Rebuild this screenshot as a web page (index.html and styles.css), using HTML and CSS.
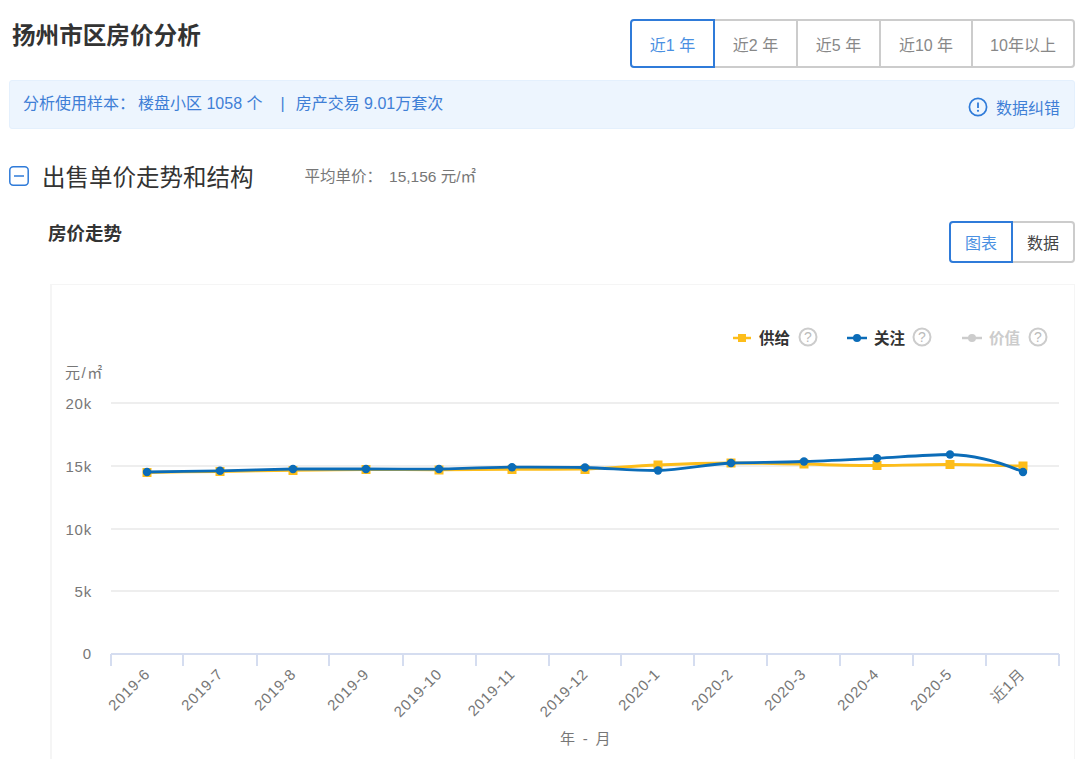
FILE: index.html
```html
<!DOCTYPE html>
<html lang="zh-CN">
<head>
    <meta charset="UTF-8">
    <title>扬州市区房价分析</title>
    <link rel="stylesheet" href="styles.css">
</head>
<body>

<header class="page-head">
    <h1>扬州市区房价分析</h1>
    <div class="tabs">
        <a class="tab active">近1 年</a>
        <a class="tab">近2 年</a>
        <a class="tab">近5 年</a>
        <a class="tab tab-wide">近10 年</a>
        <a class="tab tab-last">10年以上</a>
    </div>
</header>

<div class="sample-bar">
    <p class="sample-text">
        <span>分析使用样本：</span>
        <span>楼盘小区 1058 个</span>
        <span>|</span>
        <span>房产交易 9.01万套次</span>
    </p>
    <a class="correct">
        <svg width="20" height="20" viewBox="0 0 20 20">
            <circle cx="10" cy="10" r="8.6" fill="none" stroke="#2f7bd9" stroke-width="1.7"/>
            <path d="M10 5.5v5.6" stroke="#2f7bd9" stroke-width="1.8" fill="none"/>
            <circle cx="10" cy="13.8" r="1.1" fill="#2f7bd9"/>
        </svg>
        <span>数据纠错</span>
    </a>
</div>

<section class="section-head">
    <svg class="collapse" width="20" height="20" viewBox="0 0 20 20">
        <rect x="0.8" y="0.8" width="18.4" height="18.4" rx="3.5" fill="none" stroke="#2f7bd9" stroke-width="1.5"/>
        <path d="M5 10h10" stroke="#2f7bd9" stroke-width="1.5"/>
    </svg>
    <h2>出售单价走势和结构</h2>
    <p class="average"><span>平均单价：</span><span>15,156 元/㎡</span></p>
</section>

<div class="chart-head">
    <h3>房价走势</h3>
    <div class="tabs">
        <a class="tab tab-small active">图表</a>
        <a class="tab tab-small dark">数据</a>
    </div>
</div>

<div class="chart-card">
    <svg class="chart" width="1024" height="474" viewBox="52 285 1024 474">
        <!-- legend -->
        <g class="legend">
            <path d="M733 338h18" stroke="#fdbd1a" stroke-width="2.5"/>
            <rect x="738" y="334" width="8" height="8" fill="#fdbd1a"/>
            <text x="759" y="344">供给</text>
            <circle class="help" cx="808" cy="337" r="8.5"/>
            <text class="help-mark" x="808" y="342">?</text>

            <path d="M847 338h20" stroke="#0b6cb8" stroke-width="2.5"/>
            <circle cx="857" cy="338" r="4" fill="#0b6cb8"/>
            <text x="874" y="344">关注</text>
            <circle class="help" cx="922" cy="337" r="8.5"/>
            <text class="help-mark" x="922" y="342">?</text>

            <path d="M962 338h20" stroke="#ccc" stroke-width="2.5"/>
            <circle cx="972" cy="338" r="4" fill="#ccc"/>
            <text class="off" x="989" y="344">价值</text>
            <circle class="help" cx="1038" cy="337" r="8.5"/>
            <text class="help-mark" x="1038" y="342">?</text>
        </g>

        <!-- y axis -->
        <text class="axis-text unit" x="65" y="378">元/㎡</text>
        <path class="grid" d="M111 403H1059M111 466H1059M111 529H1059M111 591H1059"/>
        <text class="axis-text y-label" x="92" y="409">20k</text>
        <text class="axis-text y-label" x="92" y="472">15k</text>
        <text class="axis-text y-label" x="92" y="535">10k</text>
        <text class="axis-text y-label" x="92" y="597">5k</text>
        <text class="axis-text y-label" x="92" y="659">0</text>

        <!-- x axis -->
        <path class="axis" d="M111 654H1059M111 654v12M183 654v12M257 654v12M329 654v12M403 654v12M476 654v12M549 654v12M621 654v12M694 654v12M767 654v12M840 654v12M913 654v12M986 654v12M1059 654v12"/>
        <g class="axis-text x-labels">
            <text transform="translate(151 675) rotate(-45)">2019-6</text>
            <text transform="translate(224 675) rotate(-45)">2019-7</text>
            <text transform="translate(297 675) rotate(-45)">2019-8</text>
            <text transform="translate(370 675) rotate(-45)">2019-9</text>
            <text transform="translate(443 675) rotate(-45)">2019-10</text>
            <text transform="translate(516 675) rotate(-45)">2019-11</text>
            <text transform="translate(589 675) rotate(-45)">2019-12</text>
            <text transform="translate(661 675) rotate(-45)">2020-1</text>
            <text transform="translate(734 675) rotate(-45)">2020-2</text>
            <text transform="translate(807 675) rotate(-45)">2020-3</text>
            <text transform="translate(880 675) rotate(-45)">2020-4</text>
            <text transform="translate(953 675) rotate(-45)">2020-5</text>
            <text transform="translate(1026 675) rotate(-45)">近1月</text>
        </g>
        <text class="axis-text x-name" x="560" y="744">年 - 月</text>

        <!-- supply -->
        <path class="line" stroke="#fdbd1a" d="M147 472.500 C171 472.200 196 471.700 220 471.500 C244 471 269 470.500 293 470.300 C317 469.900 342 469.500 366 469.500 C390 469.500 415 469.700 439 469.800 C463 469.700 488 469.300 512 469.300 C536 469.300 561 469.400 585 469.200 C610 468 634 466 658 465 C682 463.800 707 463 731 463 C755 463 780 463.800 804 464 C828 464.800 853 465.600 877 465.500 C901 465.200 926 464.400 950 464.500 C975 464.700 999 465.600 1023 466"/>
        <g fill="#fdbd1a">
            <rect x="142.500" y="468" width="9" height="9"/>
            <rect x="215.500" y="467" width="9" height="9"/>
            <rect x="288.500" y="466" width="9" height="9"/>
            <rect x="361.500" y="465" width="9" height="9"/>
            <rect x="434.500" y="465.500" width="9" height="9"/>
            <rect x="507.500" y="465" width="9" height="9"/>
            <rect x="580.500" y="465" width="9" height="9"/>
            <rect x="653.500" y="460.500" width="9" height="9"/>
            <rect x="726.500" y="458.500" width="9" height="9"/>
            <rect x="799.500" y="459.500" width="9" height="9"/>
            <rect x="872.500" y="461" width="9" height="9"/>
            <rect x="945.500" y="460" width="9" height="9"/>
            <rect x="1018.500" y="461.500" width="9" height="9"/>
        </g>

        <!-- attention -->
        <path class="line" stroke="#0b6cb8" d="M147 472 C171 471.600 196 471.200 220 470.800 C244 470.200 269 469.400 293 469 C317 469 342 469 366 469 C390 469 415 469.200 439 469 C463 468.400 488 467.400 512 467.200 C536 467.200 561 467.100 585 467.500 C610 468.300 634 470.700 658 470.500 C682 469.500 707 464.500 731 463 C755 462.300 780 462.300 804 461.500 C828 460.800 853 459.500 877 458.300 C901 457 926 454.700 950 454.500 C975 455 1000 462 1023 472"/>
        <g fill="#0b6cb8">
            <circle cx="147" cy="472" r="4.200"/>
            <circle cx="220" cy="470.800" r="4.200"/>
            <circle cx="293" cy="469" r="4.200"/>
            <circle cx="366" cy="469" r="4.200"/>
            <circle cx="439" cy="469" r="4.200"/>
            <circle cx="512" cy="467.200" r="4.200"/>
            <circle cx="585" cy="467.500" r="4.200"/>
            <circle cx="658" cy="470.500" r="4.200"/>
            <circle cx="731" cy="463" r="4.200"/>
            <circle cx="804" cy="461.500" r="4.200"/>
            <circle cx="877" cy="458.300" r="4.200"/>
            <circle cx="950" cy="454.500" r="4.200"/>
            <circle cx="1023" cy="472" r="4.200"/>
        </g>
    </svg>
</div>

</body>
</html>
```

FILE: styles.css
```css
/* General Styles */
html, body {
    height: 759px;
    overflow: hidden;
}
body {
    margin: 0;
    padding: 19px 5px 0 9px;
    background: #fff;
    color: #333;
    font-family: "Liberation Sans", "Noto Sans CJK SC", sans-serif;
    box-sizing: border-box;
}
h1, h2, h3, p {
    margin: 0;
}

/* Top row */
.page-head {
    display: flex;
    justify-content: space-between;
    height: 49px;
}
.page-head h1 {
    font-size: 23.600px;
    line-height: 34px;
    padding-left: 3px;
    color: #333;
}
.tabs {
    display: flex;
}
.tab {
    box-sizing: border-box;
    width: 85px;
    height: 49px;
    margin-left: -2px;
    display: flex;
    align-items: center;
    justify-content: center;
    border: 2px solid #ccc;
    font-size: 16px;
    color: #888;
    background: #fff;
}
.tab:first-child {
    margin-left: 0;
    border-radius: 4px 0 0 4px;
}
.tab:last-child {
    border-radius: 0 4px 4px 0;
}
.tab.active {
    border-color: #2f7bd9;
    color: #4a90e2;
    position: relative;
    z-index: 1;
}
.tab-wide {
    width: 94px;
}
.tab-last {
    width: 104px;
}
.tab-small {
    width: 64px;
    height: 42px;
    font-size: 16px;
}
.tab.dark {
    color: #444;
}

/* Sample bar */
.sample-bar {
    margin-top: 12px;
    height: 49px;
    box-sizing: border-box;
    padding: 0 14px 0 13px;
    display: flex;
    justify-content: space-between;
    background: #edf5fe;
    border: 1px solid #e4f0fd;
    border-radius: 3px;
    color: #3f7fd6;
}
.sample-text {
    display: flex;
    font-size: 16px;
    line-height: 45px;
}
.sample-text span:nth-child(1) {
    margin-right: 3px;
}
.sample-text span:nth-child(2) {
    margin-right: 18px;
}
.sample-text span:nth-child(3) {
    margin-right: 11px;
}
.correct {
    display: flex;
    align-items: center;
    gap: 8px;
    font-size: 16px;
    padding-top: 4px;
}

/* Section heading */
.section-head {
    margin-top: 28px;
    height: 38px;
    display: flex;
    align-items: center;
}
.section-head h2 {
    margin-left: 13px;
    font-size: 23.500px;
    font-weight: 400;
    color: #333;
}
.average {
    margin: 0 0 2px 51px;
    font-size: 15.500px;
    color: #777;
    display: flex;
    gap: 7px;
}

.chart-head {
    margin-top: 26px;
    padding-left: 39px;
    height: 42px;
    display: flex;
    justify-content: space-between;
}
.chart-head h3 {
    font-size: 18.500px;
    line-height: 26px;
    color: #333;
}

/* Chart */
.chart-card {
    margin: 21px 0 0 41px;
    height: 475px;
    border: 1px solid #f5f5f5;
    border-bottom: none;
    border-left-width: 2px;
    overflow: hidden;
}
.chart {
    display: block;
}
.grid {
    stroke: #e9e9e9;
    stroke-width: 1.500;
    fill: none;
}
.axis {
    stroke: #d5ddf0;
    stroke-width: 2;
    fill: none;
}
.axis-text {
    font-size: 15px;
    fill: #777;
    letter-spacing: 0.8px;
}
.unit {
    letter-spacing: 1.500px;
}
.x-name {
    word-spacing: 2px;
}
.y-label {
    text-anchor: end;
}
.x-labels text {
    text-anchor: end;
}
.line {
    fill: none;
    stroke-width: 2.800;
}
.legend text {
    font-size: 15.500px;
    font-weight: 700;
    fill: #333;
}
.legend text.off {
    fill: #ccc;
}
.help {
    fill: none;
    stroke: #ccc;
    stroke-width: 2;
}
.legend text.help-mark {
    font-size: 14px;
    font-weight: 400;
    fill: #bbb;
    text-anchor: middle;
}
```
